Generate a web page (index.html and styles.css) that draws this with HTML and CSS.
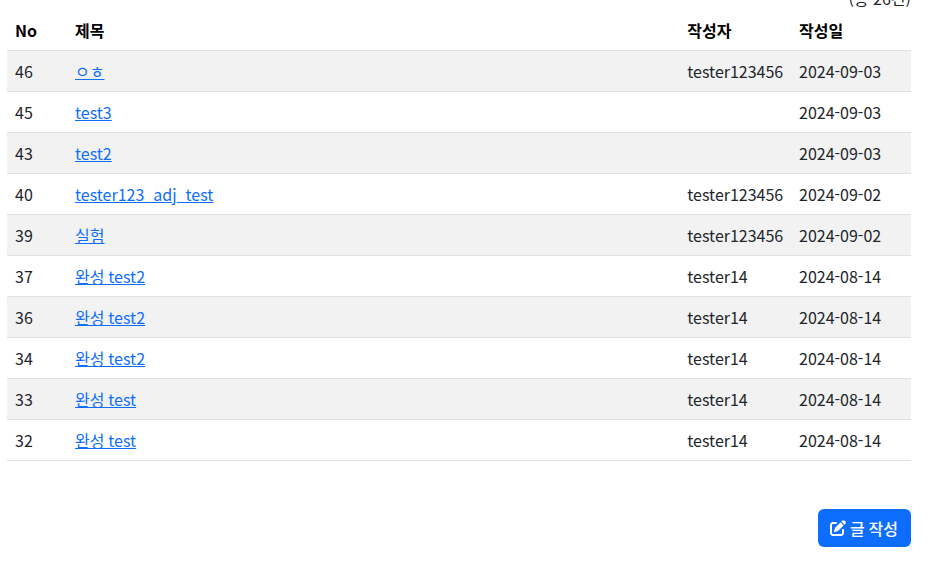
FILE: index.html
```html
<!DOCTYPE html>
<html lang="ko">
<head>
<meta charset="utf-8">
<title>게시판</title>
<link rel="stylesheet" href="styles.css">
</head>
<body>
<main class="board">
  <p class="total">(총 26건)</p>
  <table class="list">
    <colgroup>
      <col class="col-no"><col class="col-title"><col class="col-author"><col class="col-date">
    </colgroup>
    <thead>
      <tr><th>No</th><th>제목</th><th>작성자</th><th>작성일</th></tr>
    </thead>
    <tbody>
      <tr><td>46</td><td><a href="#">ㅇㅎ</a></td><td>tester123456</td><td>2024-09-03</td></tr>
      <tr><td>45</td><td><a href="#">test3</a></td><td></td><td>2024-09-03</td></tr>
      <tr><td>43</td><td><a href="#">test2</a></td><td></td><td>2024-09-03</td></tr>
      <tr><td>40</td><td><a href="#">tester123_adj_test</a></td><td>tester123456</td><td>2024-09-02</td></tr>
      <tr><td>39</td><td><a href="#">실험</a></td><td>tester123456</td><td>2024-09-02</td></tr>
      <tr><td>37</td><td><a href="#">완성 test2</a></td><td>tester14</td><td>2024-08-14</td></tr>
      <tr><td>36</td><td><a href="#">완성 test2</a></td><td>tester14</td><td>2024-08-14</td></tr>
      <tr><td>34</td><td><a href="#">완성 test2</a></td><td>tester14</td><td>2024-08-14</td></tr>
      <tr><td>33</td><td><a href="#">완성 test</a></td><td>tester14</td><td>2024-08-14</td></tr>
      <tr><td>32</td><td><a href="#">완성 test</a></td><td>tester14</td><td>2024-08-14</td></tr>
    </tbody>
  </table>
  <div class="actions">
    <a class="write-btn" href="#">
      <svg class="write-icon" viewBox="0 0 512 512" aria-hidden="true"><path fill="currentColor" d="M471.6 21.7c-21.9-21.9-57.3-21.9-79.2 0L362.3 51.7l97.9 97.9 30.1-30.1c21.9-21.9 21.9-57.3 0-79.2L471.6 21.7zm-299.2 220c-6.1 6.1-10.8 13.6-13.5 21.9l-29.6 88.8c-2.9 8.6-.6 18.1 5.8 24.6s15.9 8.7 24.6 5.8l88.8-29.6c8.2-2.7 15.7-7.4 21.9-13.5L437.7 172.3 339.7 74.3 172.4 241.7zM96 64C43 64 0 107 0 160V416c0 53 43 96 96 96H352c53 0 96-43 96-96V320c0-17.7-14.3-32-32-32s-32 14.3-32 32v96c0 17.7-14.3 32-32 32H96c-17.7 0-32-14.3-32-32V160c0-17.7 14.3-32 32-32h96c17.7 0 32-14.3 32-32s-14.3-32-32-32H96z"/></svg>
      <span class="write-label">글 작성</span>
    </a>
  </div>
</main>
</body>
</html>
```

FILE: styles.css
```css
* {
  box-sizing: border-box;
}

html,
body {
  margin: 0;
  height: 100%;
  overflow: hidden;
  background: #fff;
}

body {
  font-family: "Noto Sans CJK KR", "Noto Sans", sans-serif;
  font-size: 16px;
  line-height: 24px;
  color: #212529;
}

.board {
  margin-top: -14px;
  padding: 0 19px 0 7px;
}

.total {
  margin: 0;
  text-align: right;
}

.list {
  width: 904px;
  table-layout: fixed;
  border-collapse: collapse;
}

.col-no {
  width: 60px;
}

.col-author {
  width: 111.7px;
}

.col-date {
  width: 120px;
}

.list th,
.list td {
  padding: 8px;
  text-align: left;
  border-bottom: 1px solid #dee2e6;
  white-space: nowrap;
}

.list th {
  font-weight: 700;
  color: #000;
}

.list td {
  color: #212529;
}

.list tbody tr:nth-child(odd) td {
  background: #f2f2f2;
}

.list a {
  color: #0d6efd;
  text-decoration: underline;
  word-spacing: -0.6px;
}

.actions {
  display: flex;
  justify-content: flex-end;
  width: 904px;
  margin-top: 48px;
}

.write-btn {
  display: flex;
  align-items: center;
  gap: 4px;
  width: 93px;
  height: 38px;
  padding: 0 12px;
  border-radius: 6px;
  background: #0d6efd;
  color: #fff;
  text-decoration: none;
}

.write-icon {
  width: 16px;
  height: 16px;
}

.write-label {
  word-spacing: -0.6px;
  font-weight: 500;
}
```
